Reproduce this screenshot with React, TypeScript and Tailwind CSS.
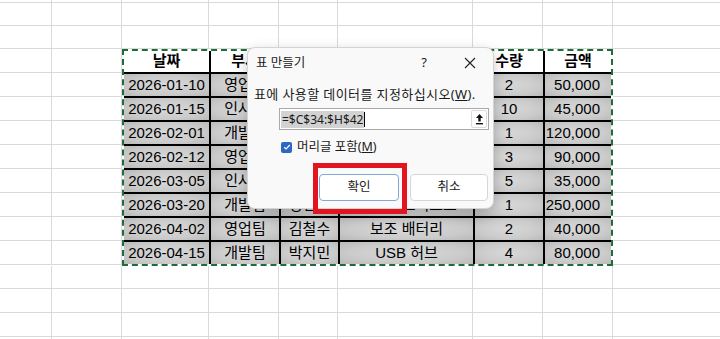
import React from 'react';

const rows = [
  ['2026-01-10', '영업팀', '홍길동', '무선 마우스', '2', '50,000'],
  ['2026-01-15', '인사팀', '이영희', '키보드', '10', '45,000'],
  ['2026-02-01', '개발팀', '최민수', '모니터', '1', '120,000'],
  ['2026-02-12', '영업팀', '홍길동', '헤드셋', '3', '90,000'],
  ['2026-03-05', '인사팀', '이영희', '웹캠', '5', '35,000'],
  ['2026-03-20', '개발팀', '정민호', '외장 하드디스크', '1', '250,000'],
  ['2026-04-02', '영업팀', '김철수', '보조 배터리', '2', '40,000'],
  ['2026-04-15', '개발팀', '박지민', 'USB 허브', '4', '80,000'],
];

const headers = ['날짜', '부서', '이름', '품목', '수량', '금액'];

// sheet column widths (grid lines at 52, 122, ... 613)
const leftCols = ['w-[52px]', 'w-[70px]'];
const midCols = ['w-[87px]', 'w-[70px]', 'w-[59px]', 'w-[135px]', 'w-[70px]', 'w-[70px]'];

const GridRow = ({ h, cols }: { h: string; cols: string[] }) => (
  <div className={`flex ${h}`}>
    {cols.map((w, i) => (
      <div key={i} className={`${w} h-full shrink-0 border-r border-b border-[#d9d9d9]`} />
    ))}
    <div className="flex-1 h-full border-b border-[#d9d9d9]" />
  </div>
);

const cellBg =
  'bg-[radial-gradient(ellipse_at_center,#d8d8d8_0%,#cbcbcb_60%,#bababa_100%)]';

const Sheet = () => (
  <div className="flex flex-col">
    <GridRow h="h-[3px]" cols={[...leftCols, ...midCols]} />
    <GridRow h="h-[23px]" cols={[...leftCols, ...midCols]} />
    <GridRow h="h-[23px]" cols={[...leftCols, ...midCols]} />

    <div className="flex h-[217px]">
      <div className="flex flex-col">
        {Array.from({ length: 9 }).map((_, i) => (
          <div key={i} className="flex h-[24px]">
            {leftCols.map((w, j) => (
              <div key={j} className={`${w} h-full border-r border-b border-[#d9d9d9]`} />
            ))}
          </div>
        ))}
      </div>

      {/* table with copy marquee */}
      <div className="w-[491px] h-[217px] shrink-0 border-2 border-dashed border-[#1f6b3a] bg-white">
        <div className="grid grid-cols-[85px_68px_57px_133px_68px_66px] grid-rows-[21px_repeat(8,22px)] gap-[2px] bg-black h-full">
          {headers.map((h) => (
            <div key={h} className="bg-white flex items-center justify-center font-bold text-[15px] text-black">
              {h}
            </div>
          ))}
          {rows.map((r, i) =>
            r.map((c, j) => (
              <div
                key={`${i}-${j}`}
                className={`${cellBg} flex items-center text-[15px] text-black whitespace-nowrap overflow-hidden ${
                  j === 5 ? 'justify-end pr-[11px]' : 'justify-center'
                }`}
              >
                {c}
              </div>
            ))
          )}
        </div>
      </div>

      <div className="flex-1 flex flex-col">
        {Array.from({ length: 9 }).map((_, i) => (
          <div key={i} className="h-[24px] border-b border-[#d9d9d9]" />
        ))}
      </div>
    </div>

    <GridRow h="h-[23px]" cols={[...leftCols, ...midCols]} />
    <GridRow h="h-[24px]" cols={[...leftCols, ...midCols]} />
    <GridRow h="h-[24px]" cols={[...leftCols, ...midCols]} />
    <GridRow h="h-[24px]" cols={[...leftCols, ...midCols]} />
  </div>
);

const Dialog = () => (
  <div className="absolute left-[247px] top-[47px] w-[247px] h-[162px] rounded-lg bg-[#f9f9f9] border border-[#d4d4d4] shadow-[0_4px_14px_rgba(0,0,0,0.2)] flex flex-col text-[#1a1a1a]">
    <div className="flex items-center h-[30px] shrink-0">
      <div className="flex-1 pl-[8px] text-[12.5px]">표 만들기</div>
      <div className="w-[46px] flex justify-center text-[13px]">?</div>
      <div className="w-[46px] flex justify-center">
        <svg width="12" height="12" viewBox="0 0 12 12">
          <path d="M1 1L11 11M11 1L1 11" stroke="#222" strokeWidth="1.1" />
        </svg>
      </div>
    </div>

    <div className="pl-[6px] mt-[7px] text-[13px] tracking-[0.4px] leading-[18px] whitespace-nowrap">
      표에 사용할 데이터를 지정하십시오(<span className="underline">W</span>).
    </div>

    <div className="ml-[31px] mt-[5px] w-[210px] h-[22px] bg-white border border-[#a9a9a9] flex items-center">
      <div className="flex-1 flex items-center pl-[1px] text-[12px]">
        <span className="bg-[#d2d2d2] px-[1px] leading-[17px]">=$C$34:$H$42</span>
        <span className="w-px h-[15px] bg-black" />
      </div>
      <div className="w-[16px] h-[18px] mr-[1px] border border-[#dcdcdc] rounded-[2px] flex items-center justify-center">
        <svg width="9" height="12" viewBox="0 0 9 12">
          <path d="M4.5 1L1 5H3.3V8.5H5.7V5H8Z" fill="#111" />
          <rect x="1" y="10" width="7" height="1.4" fill="#111" />
        </svg>
      </div>
    </div>

    <div className="flex items-center ml-[33px] mt-[10px] h-[14px] gap-[5px]">
      <div className="w-[11px] h-[11px] rounded-[2px] bg-[#2a68c2] flex items-center justify-center">
        <svg width="8" height="8" viewBox="0 0 8 8">
          <path d="M1.2 4.2L3.1 6L6.8 2" stroke="white" strokeWidth="1.2" fill="none" />
        </svg>
      </div>
      <span className="text-[12.5px]">
        머리글 포함(<span className="underline">M</span>)
      </span>
    </div>

    <div className="flex ml-[71px] mt-[20px] gap-[11px]">
      <div className="w-[80px] h-[27px] bg-white rounded-[4px] border border-[#82a9d6] flex items-center justify-center text-[12.5px]">
        확인
      </div>
      <div className="w-[78px] h-[27px] bg-white rounded-[4px] border border-[#d6d6d6] flex items-center justify-center text-[12.5px]">
        취소
      </div>
    </div>
  </div>
);

export default function App() {
  return (
    <div
      className="relative w-[720px] h-[339px] overflow-hidden bg-white"
      style={{ fontFamily: '"Liberation Sans", "Noto Sans CJK KR", sans-serif' }}
    >
      <Sheet />
      <div style={{ fontFamily: '"Noto Sans", "Noto Sans CJK KR", sans-serif' }}>
        <Dialog />
      </div>
      {/* red highlight around 확인 */}
      <div className="absolute left-[313px] top-[163px] w-[94px] h-[51px] border-[5px] border-[#e3141f]" />
    </div>
  );
}
